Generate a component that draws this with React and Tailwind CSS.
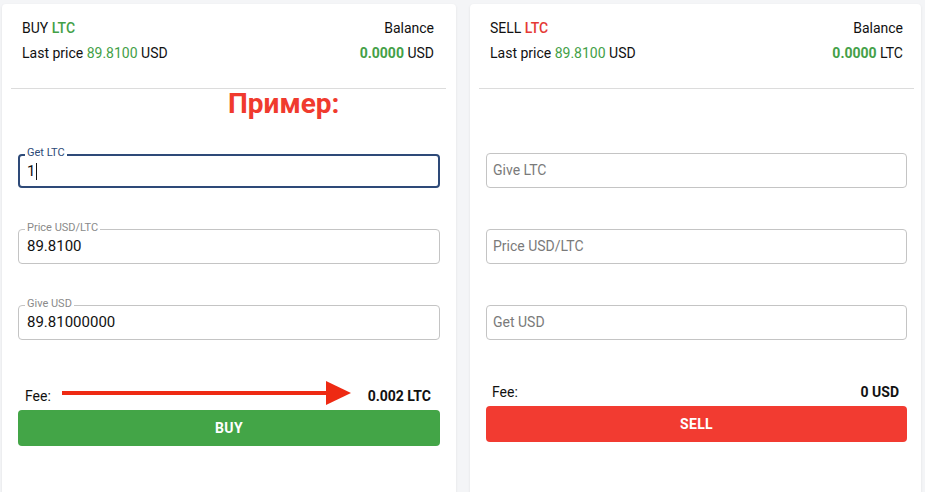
import React from 'react';

function OutlinedField({ label, value, focused }) {
  return (
    <div className="relative mx-4">
      <div
        className={
          focused
            ? 'h-[34px] rounded-[4px] border-2 border-[#2e4a78] px-[7px] flex items-center'
            : 'h-[35px] rounded-[4px] border border-[#c4c4c4] px-[8px] flex items-center'
        }
      >
        <span className="text-[15px] text-[#111]">{value}</span>
        {focused && <span className="ml-[1px] w-px h-[17px] bg-[#111]"></span>}
      </div>
      <span
        className={
          'absolute left-[7px] -top-[7px] bg-white px-[2px] text-[11px] leading-[12px] ' +
          (focused ? 'text-[#2e4a78]' : 'text-[#8a8a8a]')
        }
      >
        {label}
      </span>
    </div>
  );
}

function PlainField({ placeholder }) {
  return (
    <div className="mx-4 h-[35px] rounded-[4px] border border-[#c4c4c4] px-[6px] flex items-center">
      <span className="text-[14px] text-[#7a7a7a]">{placeholder}</span>
    </div>
  );
}

export default function App() {
  return (
    <div
      className="h-[492px] overflow-hidden bg-[#f4f5f7] pl-[2px] pr-[4px] pt-[4px] flex gap-[14px]"
      style={{ fontFamily: 'Roboto, "Liberation Sans", sans-serif' }}
    >
      {/* BUY */}
      <div className="relative w-[454px] h-[520px] bg-white rounded-[4px] shadow-[0_1px_3px_rgba(0,0,0,0.08)]">
        <div className="pt-[14px] px-5 text-[14px] text-[#111] leading-[20px]">
          <div className="flex justify-between">
            <span>BUY <span className="text-[#43a047] font-medium">LTC</span></span>
            <span className="pr-[2px]">Balance</span>
          </div>
          <div className="flex justify-between mt-[5px]">
            <span>Last price <span className="text-[#43a047]">89.8100</span> USD</span>
            <span className="pr-[2px]"><span className="text-[#43a047] font-bold">0.0000</span> USD</span>
          </div>
        </div>
        <div className="ml-[9px] mr-[10px] mt-[25px] h-px bg-[#dcdcdc]"></div>

        {/* аннотация */}
        <div className="absolute left-[226px] top-[83px] text-[28px] font-bold text-[#f03a2e] leading-[34px]">
          Пример:
        </div>

        <div className="mt-[65px] flex flex-col gap-[41px]">
          <OutlinedField label="Get LTC" value="1" focused />
          <OutlinedField label="Price USD/LTC" value="89.8100" />
          <OutlinedField label="Give USD" value="89.81000000" />
        </div>

        <div className="mt-[46px] mx-[23px] pr-[2px] flex justify-between items-center text-[14px] text-[#111] leading-[20px]">
          <span>Fee:</span>
          <span className="font-bold">0.002 LTC</span>
        </div>
        <div className="mt-[4px] mx-4 h-[36px] rounded-[4px] bg-[#43a547] flex items-center justify-center text-white text-[14px] font-bold tracking-wide">
          BUY
        </div>

        <svg className="absolute left-[58px] top-[374px]" width="294" height="30" viewBox="0 0 294 30">
          <rect x="2" y="13" width="266" height="4" fill="#ee2a13" />
          <polygon points="266,3 291,15 266,27" fill="#ee2a13" />
        </svg>
      </div>

      {/* SELL */}
      <div className="w-[451px] h-[520px] bg-white rounded-[4px] shadow-[0_1px_3px_rgba(0,0,0,0.08)]">
        <div className="pt-[14px] pl-5 pr-[18px] text-[14px] text-[#111] leading-[20px]">
          <div className="flex justify-between">
            <span>SELL <span className="text-[#e53935] font-medium">LTC</span></span>
            <span>Balance</span>
          </div>
          <div className="flex justify-between mt-[5px]">
            <span>Last price <span className="text-[#43a047]">89.8100</span> USD</span>
            <span><span className="text-[#43a047] font-bold">0.0000</span> LTC</span>
          </div>
        </div>
        <div className="ml-[9px] mr-[7px] mt-[25px] h-px bg-[#dcdcdc]"></div>

        <div className="mt-[64px] mr-[-2px] flex flex-col gap-[41px]">
          <PlainField placeholder="Give LTC" />
          <PlainField placeholder="Price USD/LTC" />
          <PlainField placeholder="Get USD" />
        </div>

        <div className="mt-[42px] mx-[22px] flex justify-between items-center text-[14px] text-[#111] leading-[20px]">
          <span>Fee:</span>
          <span className="font-bold">0 USD</span>
        </div>
        <div className="mt-[4px] ml-4 mr-[14px] h-[36px] rounded-[4px] bg-[#f23b31] flex items-center justify-center text-white text-[14px] font-bold tracking-wide">
          SELL
        </div>
      </div>
    </div>
  );
}
